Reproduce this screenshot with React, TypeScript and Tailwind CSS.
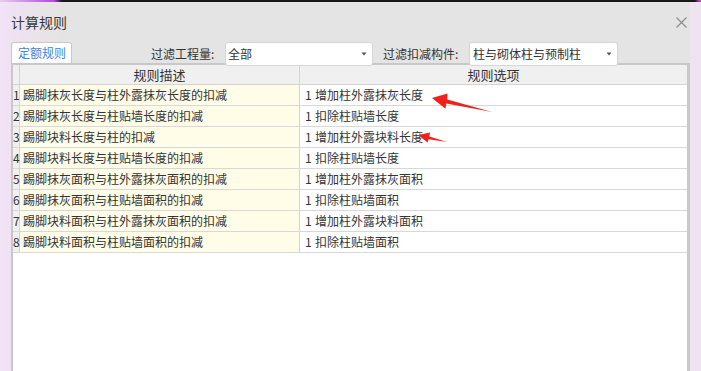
import React from "react";

const rows: [string, string][] = [
  ["踢脚抹灰长度与柱外露抹灰长度的扣减", "增加柱外露抹灰长度"],
  ["踢脚抹灰长度与柱贴墙长度的扣减", "扣除柱贴墙长度"],
  ["踢脚块料长度与柱的扣减", "增加柱外露块料长度"],
  ["踢脚块料长度与柱贴墙长度的扣减", "扣除柱贴墙长度"],
  ["踢脚抹灰面积与柱外露抹灰面积的扣减", "增加柱外露抹灰面积"],
  ["踢脚抹灰面积与柱贴墙面积的扣减", "扣除柱贴墙面积"],
  ["踢脚块料面积与柱外露抹灰面积的扣减", "增加柱外露块料面积"],
  ["踢脚块料面积与柱贴墙面积的扣减", "扣除柱贴墙面积"],
];

function Caret() {
  return (
    <svg width="6" height="4" viewBox="0 0 6 4" className="shrink-0">
      <path d="M0.5 0.5 L5.5 0.5 L3 3.5 Z" fill="#555" />
    </svg>
  );
}

export default function App() {
  return (
    <div className="relative w-[701px] h-[371px] overflow-hidden flex flex-col bg-[#eee4ef] font-['Noto_Sans_CJK_SC','Noto_Sans',sans-serif] text-[#333]">
      <div className="h-[2px] w-full shrink-0 bg-[linear-gradient(to_right,#e8ccf4_0px,#b24ad8_54px,#181818_62px,#181818_695px,#c040c8_699px)]" />
      <div className="flex flex-1 min-h-0">
        <div className="w-[690px] flex flex-col bg-[linear-gradient(to_right,#f2e3f6_0px,#eee2f1_16px,#e4e4e4_62px)]">
          {/* title */}
          <div className="h-[40px] shrink-0 flex items-center pl-[11px] pr-[3px]">
            <span className="text-[14px] leading-[20px] text-[#383838]">计算规则</span>
            <svg width="11" height="11" viewBox="0 0 11 11" className="ml-auto">
              <path d="M0.5 0.5 L10.5 10.5 M10.5 0.5 L0.5 10.5" stroke="#8a8a8a" strokeWidth="1.1" />
            </svg>
          </div>
          {/* filters */}
          <div className="relative z-10 h-[21px] shrink-0 flex items-start pl-[11px] text-[12px]">
            <div className="w-[61px] h-[21px] bg-white border border-b-0 border-[#c8c8c8] rounded-t-[3px] pl-[6px] leading-[20px] text-[#3c86dc]">
              定额规则
            </div>
            <div className="ml-[79px] w-[74px] h-[24px] leading-[24px] text-[#333]">过滤工程量:</div>
            <div className="w-[148px] h-[24px] bg-white border border-[#d6d6d6] rounded-[3px] flex items-center pl-[2px] pr-[5px]">
              <span className="flex-1 leading-[20px]">全部</span>
              <Caret />
            </div>
            <div className="ml-[10px] w-[86px] h-[24px] leading-[24px] text-[#333]">过滤扣减构件:</div>
            <div className="w-[149px] h-[24px] bg-white border border-[#d6d6d6] rounded-[3px] flex items-center pl-[3px] pr-[5px]">
              <span className="flex-1 leading-[20px]">柱与砌体柱与预制柱</span>
              <Caret />
            </div>
          </div>
          {/* table */}
          <div className="flex-1 min-h-0 ml-[11px] bg-white border-l-2 border-t-2 border-r-[3px] border-[#c8c8c8] flex flex-col text-[12px]">
            <div className="h-[20px] shrink-0 flex bg-[#f0f0f0] border-b border-[#d4d4d4] text-[13px] leading-[19px]">
              <div className="w-[7px] border-r border-[#d4d4d4]" />
              <div className="w-[280px] border-r border-[#d4d4d4] text-center">规则描述</div>
              <div className="flex-1 text-center">规则选项</div>
            </div>
            {rows.map(([d, o], i) => (
              <div key={i} className="h-[21px] shrink-0 flex border-b border-[#d8d8d8] leading-[20px]">
                <div className="w-[7px] bg-[#f0f0f0] border-r border-[#d4d4d4] overflow-visible whitespace-nowrap">{i + 1}</div>
                <div className="w-[280px] bg-[#fffde7] border-r border-[#d4d4d4] pl-[3px] whitespace-nowrap">{d}</div>
                <div className="flex-1 bg-white pl-[5px] whitespace-nowrap">
                  <span className="inline-block w-[10px]">1 </span>
                  {o}
                </div>
              </div>
            ))}
          </div>
        </div>
        <div className="flex-1" />
      </div>
      {/* annotation arrows */}
      <svg width="701" height="371" viewBox="0 0 701 371" className="absolute inset-0 pointer-events-none">
        <polygon points="432,98 447.5,93.5 447.3,99.6 492,112 446.3,103.4 445.5,108.8" fill="#f2201a" />
        <polygon points="418,135 430,132.6 429.3,136.6 447,142 428.6,139.2 427.6,142.6" fill="#f2201a" />
      </svg>
    </div>
  );
}
